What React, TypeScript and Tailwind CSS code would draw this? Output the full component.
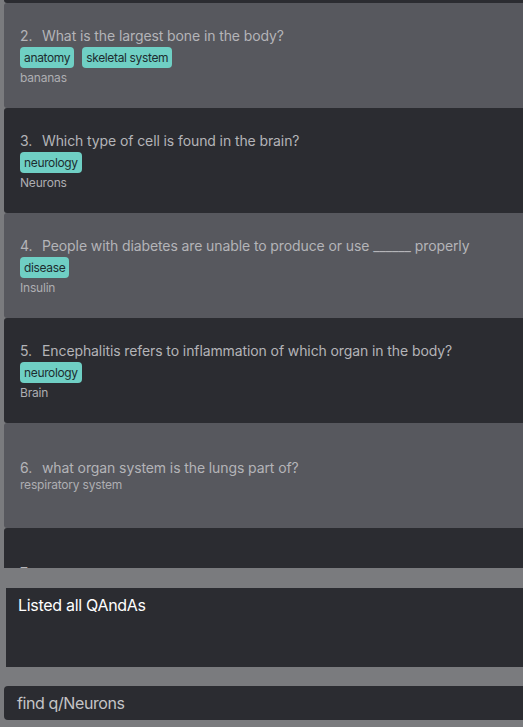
const items = [
  { id: 1, q: "What is a cell?", tags: ["biology"], a: "The basic unit of life" },
  { id: 2, q: "What is the largest bone in the body?", tags: ["anatomy", "skeletal system"], a: "bananas" },
  { id: 3, q: "Which type of cell is found in the brain?", tags: ["neurology"], a: "Neurons" },
  { id: 4, q: "People with diabetes are unable to produce or use ______ properly", tags: ["disease"], a: "Insulin" },
  { id: 5, q: "Encephalitis refers to inflammation of which organ in the body?", tags: ["neurology"], a: "Brain" },
  { id: 6, q: "what organ system is the lungs part of?", tags: [], a: "respiratory system" },
  { id: 7, q: "", tags: [], a: "\u00a0" },
];

function Card({ item, dark }: { item: (typeof items)[number]; dark: boolean }) {
  return (
    <div
      className={`h-[105px] rounded-l-[3px] flex flex-col justify-center pl-4 ${
        dark ? "bg-[#2b2c31]" : "bg-[#57585e]"
      }`}
    >
      <div className="flex text-[14px] leading-[18px] text-[#b4b4b8] tracking-[-0.1px]">
        <span className="w-[22px]">{item.id}.</span>
        <span>{item.q}</span>
      </div>
      {item.tags.length > 0 && (
        <div className="flex gap-2 mt-[2px] mb-[2px]">
          {item.tags.map((t) => (
            <span
              key={t}
              className="bg-[#6fcfc4] text-[#1d2d30] text-[12px] leading-[21px] px-1 rounded-[4px] tracking-[-0.35px]"
            >
              {t}
            </span>
          ))}
        </div>
      )}
      <div className="text-[12px] leading-[15px] text-[#aeaeb2] tracking-[-0.2px]">{item.a}</div>
    </div>
  );
}

export default function App() {
  return (
    <div
      className="h-[727px] w-[523px] bg-[#7a7b7e] flex flex-col overflow-hidden"
      style={{ fontFamily: "Inter, 'Noto Sans', sans-serif" }}
    >
      <div className="h-[568px] overflow-hidden pl-1 shrink-0">
        <div className="-mt-[102px]">
          {items.map((item, i) => (
            <Card key={item.id} item={item} dark={i % 2 === 0} />
          ))}
        </div>
      </div>

      <div className="mt-5 ml-[6px] h-[79px] bg-[#2b2c31] px-3 pt-[5px] text-white text-[16px] tracking-[-0.3px]">
        Listed all QAndAs
      </div>

      <div className="mt-[19px] ml-1 h-[34px] bg-[#2b2c31] rounded-l-[4px] flex items-center px-[13px] text-[16px] text-[#c4c4c6] tracking-[-0.4px]">
        find q/Neurons
      </div>
    </div>
  );
}
